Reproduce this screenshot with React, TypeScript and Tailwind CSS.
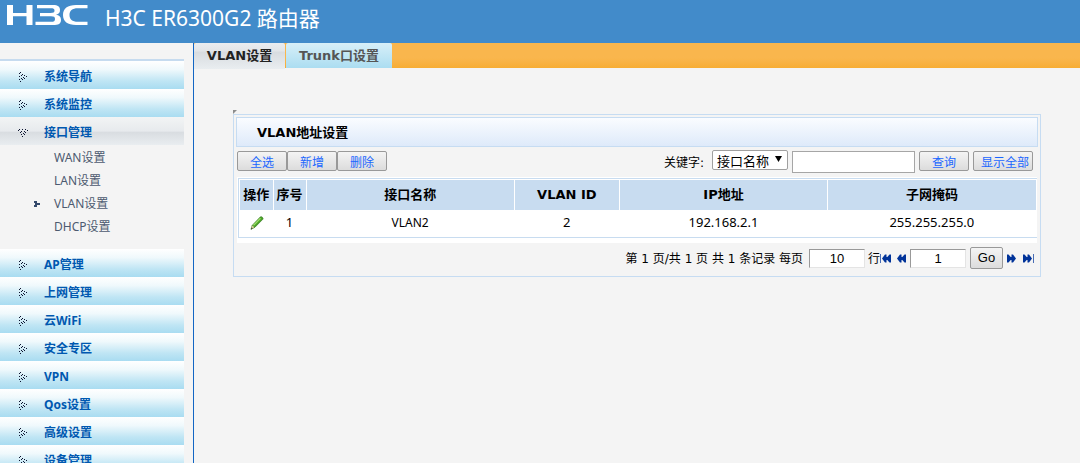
import { useState } from 'react';
import { clsx } from 'clsx';

interface MenuItem {
  name: string;
  children?: string[];
}

const MENU: MenuItem[] = [
  { name: '系统导航' },
  { name: '系统监控' },
  { name: '接口管理', children: ['WAN设置', 'LAN设置', 'VLAN设置', 'DHCP设置'] },
  { name: 'AP管理' },
  { name: '上网管理' },
  { name: '云WiFi' },
  { name: '安全专区' },
  { name: 'VPN' },
  { name: 'Qos设置' },
  { name: '高级设置' },
  { name: '设备管理' },
];

const ROWS = [{ id: 1, name: 'VLAN2', vlan: 2, ip: '192.168.2.1', mask: '255.255.255.0' }];

const buttonClass =
  'h-5 rounded-xs border border-[#999] bg-linear-to-b from-[#f4f4f4] to-[#dcdcdc] pt-1 text-center text-[12px] leading-[14px] text-[#1a66ff] whitespace-nowrap';

const pageInputClass =
  'h-[19px] w-14 border border-t-[#999] border-l-[#999] border-r-[#e4e4e4] border-b-[#e4e4e4] bg-white text-center font-["Liberation_Sans",sans-serif] text-[13px] leading-4';

function Logo() {
  return (
    <svg className="h-6 w-[82px]" viewBox="0 0 82 24" fill="#fff" aria-label="H3C" role="img">
      <path d="M0 1h6v8h13.500V1h6v20h-6v-8.800H6V21H0z" />
      <path d="M30 1h16c5 0 7 1.800 7 4.800s-1 4.200-4 4.900c3 .5 5 2 5 5 0 4-2.500 5.300-8 5.300H28.500v-3.200H44c3 0 4-.8 4-2.900s-1-2.700-4-2.700H33V9h10.500c3 0 4-.6 4-2.400s-1-2.400-4-2.400H30z" />
      <path d="M80.500 1v3.200H71c-6 0-8.500 2.500-8.500 6.800s2.500 6.800 8.500 6.800h9.500V21H69c-8.500 0-13-3.500-13-10S60.500 1 69 1z" />
    </svg>
  );
}

// Dotted chevron in front of every menu group
function DotArrow({ open }: { open?: boolean }) {
  const dots = [
    [2, 0], [1, 1], [4, 2], [3, 3], [6, 3], [1, 4], [8, 4], [5, 5], [3, 6], [6, 6], [4, 7], [1, 7], [2, 9],
  ];
  return (
    <svg className="h-[10px] w-[10px]" viewBox="0 0 10 10" fill="#0c1430" shapeRendering="crispEdges">
      {dots.map(([x, y]) => (
        <rect key={`${x}-${y}`} x={open ? y : x} y={open ? x : y} width="1" height="1" />
      ))}
    </svg>
  );
}

function PageArrow({ back, end }: { back?: boolean; end?: boolean }) {
  return (
    <svg
      className={clsx('h-[9px]', end ? 'w-[11px]' : 'w-[9px]', back && 'rotate-180')}
      viewBox={end ? '0 0 11 9' : '0 0 9 9'}
      fill="#003399"
    >
      <path d="M0 .5h1.500L5 4.500l-3.500 4H0V6h1V3H0z" />
      <path d="M4.500 .5H6l3 4-3 4H4.500V6L5 4.500 4.500 3z" />
      <path d="M0 3h7v3H0z" />
      {end && <path d="M10 0h1v9h-1z" opacity=".7" />}
    </svg>
  );
}

function Pencil() {
  return (
    <svg className="h-[14px] w-[14px]" viewBox="0 0 14 14">
      <path d="M10.500.8c1-.6 3 1 2.500 2.300L5 11.200 1 13.300l1.300-4z" fill="#4aa526" stroke="#35761f" strokeWidth=".7" />
      <path d="M3.500 9.300l7-7" stroke="#9fdc6c" strokeWidth="1.300" />
      <path d="M2.300 9.500L1 13.300l3.500-2z" fill="#d8c79a" />
      <path d="M1.500 11.700L.8 13.500l1.900-.9z" fill="#333" />
    </svg>
  );
}

function Sidebar() {
  const [current, setCurrent] = useState('VLAN设置');

  return (
    <nav className="w-[194px] shrink-0 border-r border-[#1266c4] pt-4 pr-[9px]">
      <ul className="border-t-2 border-[#c6dbef]">
        {MENU.map((item) => (
          <li key={item.name}>
            <button
              className={clsx(
                'flex h-7 w-full items-center pt-1 pl-[18px] text-left text-[12px] font-bold text-[#0058b0]',
                item.children
                  ? 'bg-[linear-gradient(#f2f4f5,#e7eaed_50%,#d9dde1_55%,#e9edf0)]'
                  : 'bg-[linear-gradient(#fff,#f0f9fc_30%,#bfe5f4_72%,#a9dcf1)]'
              )}
            >
              <span className="w-[26px]"><DotArrow open={!!item.children} /></span>
              {item.name}
            </button>
            {item.children && (
              <ul className="pt-px pb-[11px]">
                {item.children.map((child) => (
                  <li key={child} className="flex h-[23px] items-center pl-[34px] text-[12px] text-[#4d5a70]">
                    <span className="w-5">
                      {child === current && (
                        <svg className="h-[6px] w-[6px]" viewBox="0 0 6 6" fill="#34496b">
                          <path d="M0 0h3v2h3v2H3v2H0V4h1V2H0z" />
                        </svg>
                      )}
                    </span>
                    <a href="#" onClick={() => setCurrent(child)}>{child}</a>
                  </li>
                ))}
              </ul>
            )}
          </li>
        ))}
      </ul>
    </nav>
  );
}

function VlanTable() {
  return (
    <div className="mt-[6px] bg-white pt-px pb-[5px] pl-px">
      <div className="border-y border-l border-[#c8dcf0] p-px">
        <table className="w-full table-fixed border-collapse text-center text-[13px]">
          <colgroup>
            <col className="w-[33px]" />
            <col className="w-[33px]" />
            <col />
            <col className="w-[105px]" />
            <col />
            <col />
          </colgroup>
          <thead>
            <tr className="h-[30px] bg-[#c8dcf0]">
              {['操作', '序号', '接口名称', 'VLAN ID', 'IP地址', '子网掩码'].map((title) => (
                <th
                  key={title}
                  className='border-r border-white p-0 font-["DejaVu_Sans","Noto_Sans_CJK_SC",sans-serif] leading-4 font-bold last:border-r-0'
                >
                  {title}
                </th>
              ))}
            </tr>
          </thead>
          <tbody>
            {ROWS.map((row) => (
              <tr key={row.id} className="h-[26px]">
                <td className="p-0">
                  <button className="block pl-[10px]" aria-label="编辑"><Pencil /></button>
                </td>
                <td className="p-0">{row.id}</td>
                <td className="p-0 text-[12px]">{row.name}</td>
                <td className="p-0">{row.vlan}</td>
                <td className="p-0">{row.ip}</td>
                <td className="p-0">{row.mask}</td>
              </tr>
            ))}
          </tbody>
        </table>
      </div>
    </div>
  );
}

function Pager() {
  const [size, setSize] = useState('10');
  const [page, setPage] = useState('1');

  return (
    <div className='flex h-[30px] items-center justify-end pr-[3px] font-["DejaVu_Sans","Noto_Sans_CJK_SC",sans-serif] text-[12px]'>
      <label htmlFor="page-size" className="pt-px pr-[6px]">第 1 页/共 1 页 共 1 条记录 每页</label>
      <input id="page-size" className={pageInputClass} value={size} onChange={(e) => setSize(e.target.value)} />
      <span className="pt-px pl-[3px]">行</span>
      <button aria-label="首页"><PageArrow back end /></button>
      <button className="mr-1 ml-[6px]" aria-label="上一页"><PageArrow back /></button>
      <input aria-label="页码" className={pageInputClass} value={page} onChange={(e) => setPage(e.target.value)} />
      <button className='mx-1 h-[22px] w-[33px] rounded-xs border border-[#999] bg-linear-to-b from-[#f4f4f4] to-[#dcdcdc] font-["Liberation_Sans",sans-serif] text-[13px] leading-4'>
        Go
      </button>
      <button aria-label="下一页"><PageArrow /></button>
      <button className="ml-[7px]" aria-label="末页"><PageArrow end /></button>
    </div>
  );
}

function VlanPanel() {
  const [keyword, setKeyword] = useState('');

  return (
    <section className="relative mx-[39px] mt-[46px] border border-[#c6dcf2] px-[2px] pt-[2px] pb-[3px]">
      <svg className="absolute -top-[5px] -left-px h-1 w-1" viewBox="0 0 4 4" fill="#8c8c8c">
        <path d="M0 0h4L0 4z" />
      </svg>
      <h2 className='h-[30px] border border-[#c6dcf2] bg-linear-to-b from-[#fafcff] to-[#deeafa] pt-px pl-5 font-["DejaVu_Sans","Noto_Sans_CJK_SC",sans-serif] text-[13px] leading-7 font-bold'>
        VLAN地址设置
      </h2>
      <div className="pr-px pl-px">
        <div className="flex pt-1">
          {['全选', '新增', '删除'].map((text) => (
            <button key={text} className={clsx(buttonClass, 'w-[50px]')}>{text}</button>
          ))}
          <div className="ml-auto flex h-5 items-start pr-1">
            <label
              htmlFor="field"
              className='pt-1 pr-2 font-["DejaVu_Sans","Noto_Sans_CJK_SC",sans-serif] text-[12px] leading-4'
            >
              关键字:
            </label>
            <div className="relative -mt-px">
              <select
                id="field"
                className="block h-5 w-[76px] appearance-none rounded-xs border border-[#a0a0a0] bg-white pt-px pl-1 text-[13px] leading-4"
              >
                <option>接口名称</option>
                <option>VLAN ID</option>
                <option>IP地址</option>
              </select>
              <svg className="pointer-events-none absolute top-[6px] right-[6px] h-[6px] w-[7px]" viewBox="0 0 7 6">
                <path d="M0 0h7L3.500 6z" />
              </svg>
            </div>
            <input
              aria-label="关键字"
              className="ml-1 h-[22px] w-[123px] border border-[#a6a6a6] bg-white px-1 text-[12px]"
              value={keyword}
              onChange={(e) => setKeyword(e.target.value)}
            />
            <button className={clsx(buttonClass, 'ml-1 w-[50px]')}>查询</button>
            <button className={clsx(buttonClass, 'ml-1 w-[60px] pl-1')}>显示全部</button>
          </div>
        </div>
        <VlanTable />
        <Pager />
      </div>
    </section>
  );
}

export default function App() {
  return (
    <div className='flex h-screen flex-col overflow-hidden bg-[#f4f4f4] font-["Noto_Sans","Noto_Sans_CJK_SC",sans-serif] text-black'>
      <header className="flex h-[43px] shrink-0 items-start bg-[#428bca] pt-1 pl-[7px] text-white">
        <Logo />
        <h1 className="pl-4 text-[21px] leading-7">H3C ER6300G2 路由器</h1>
      </header>
      <div className="flex min-h-0 flex-1">
        <Sidebar />
        <main className="min-w-0 flex-1">
          <div className="flex h-[25px] bg-linear-to-b from-[#f9b64d] from-60% to-[#f7ad33] font-['DejaVu_Sans','Noto_Sans_CJK_SC',sans-serif] text-[13px] font-bold">
            <button className="h-[26px] w-[91px] rounded-t-xs bg-[linear-gradient(#eaedf0,#e2e5e8_30%,#d8dce0_36%,#e9edf0)] text-[#222]">
              VLAN设置
            </button>
            <button className="ml-px w-[106px] rounded-t-xs bg-linear-to-b from-[#d7eff8] to-[#abddf1] text-[#555]">
              Trunk口设置
            </button>
          </div>
          <VlanPanel />
        </main>
      </div>
    </div>
  );
}
